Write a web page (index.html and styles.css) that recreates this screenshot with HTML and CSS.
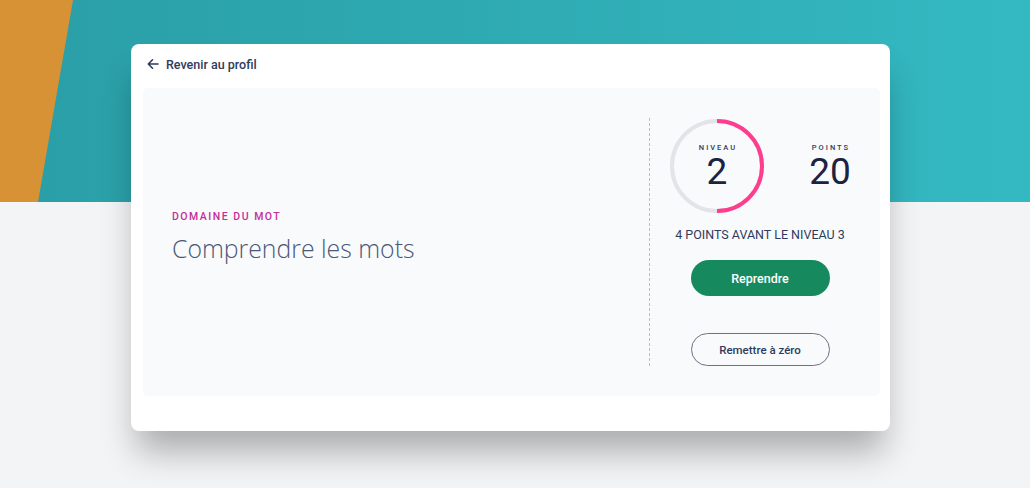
FILE: index.html
```html
<!DOCTYPE html>
<html lang="fr">
<head>
    <meta charset="UTF-8">
    <title>Comprendre les mots</title>
    <meta name="viewport" content="width=device-width, initial-scale=1.0">
    <link rel="stylesheet" href="styles.css">
</head>
<body>
    <div class="hero"></div>
    <div class="card">
        <a class="back" href="#">
            <svg width="12" height="12" viewBox="0 0 12 12"><path d="M11 6H1.5M5.5 1.8L1.3 6l4.2 4.2" fill="none" stroke="#2f3b5c" stroke-width="1.6" stroke-linecap="round" stroke-linejoin="round"/></svg>
            <span>Revenir au profil</span>
        </a>
        <div class="panel">
            <div class="domain">
                <div class="domain-label">DOMAINE DU MOT</div>
                <h1>Comprendre les mots</h1>
            </div>
            <div class="progress">
                <div class="stats">
                    <div class="ring">
                        <svg width="94" height="94" viewBox="0 0 94 94">
                            <circle cx="47" cy="47" r="45" fill="none" stroke="#e3e4e8" stroke-width="4"/>
                            <path d="M47 2a45 45 0 0 1 0 90" fill="none" stroke="#ff3d8e" stroke-width="4"/>
                        </svg>
                        <div class="ring-text">
                            <div class="small-label">NIVEAU</div>
                            <div class="big-num">2</div>
                        </div>
                    </div>
                    <div class="points">
                        <div class="small-label">POINTS</div>
                        <div class="big-num">20</div>
                    </div>
                </div>
                <div class="next">4 POINTS AVANT LE NIVEAU 3</div>
                <button class="btn-primary">Reprendre</button>
                <button class="btn-outline">Remettre à zéro</button>
            </div>
        </div>
    </div>
</body>
</html>
```

FILE: styles.css
```css
body { margin: 0; font-family: Roboto, "Liberation Sans", sans-serif; background: #f3f4f6; min-height: 488px; }
.hero { position: relative; height: 202px; background: linear-gradient(90deg, #2a9ea6 0%, #2fabb3 50%, #34b9c2 100%); overflow: hidden; }
.hero::before { content: ""; position: absolute; left: 0; top: 0; width: 80px; height: 100%; background: #d89236; clip-path: polygon(0 0, 73px 0, 38px 100%, 0 100%); }
.card { position: relative; width: 737px; margin: -158px 0 0 131px; padding: 0 10px 35px 12px; background: #fff; border-radius: 8px; box-shadow: 0 26px 34px -6px rgba(0,0,0,0.3); }
.back { display: flex; align-items: center; gap: 7px; height: 40px; padding: 0 0 4px 4px; color: #2f3b5c; text-decoration: none; font-size: 12.5px; font-weight: 500; }
.back svg { display: block; }
.panel { display: flex; height: 248px; padding: 30px 0; background: #f9fafc; border-radius: 5px; }
.domain { flex: 1; display: flex; flex-direction: column; justify-content: center; padding: 0 0 10px 29px; }
.domain-label { color: #c42d9b; font-size: 10.5px; letter-spacing: 1.5px; font-weight: 500; }
h1 { margin: 8px 0 0; font-family: "Open Sans", sans-serif; font-weight: 300; font-size: 24.8px; color: #4b5878; }
.progress { width: 180px; padding: 0 30px 0 20px; border-left: 1px dashed #b9bcc5; display: flex; flex-direction: column; align-items: center; }
.stats { width: 100%; display: flex; justify-content: space-between; align-items: flex-start; margin-top: 1px; }
.ring { position: relative; width: 94px; height: 94px; }
.ring svg { display: block; }
.ring-text { position: absolute; left: 0; top: 0; width: 100%; height: 100%; display: flex; flex-direction: column; align-items: center; padding-top: 24px; box-sizing: border-box; }
.points { display: flex; flex-direction: column; align-items: center; width: 40px; padding-top: 24px; }
.small-label { font-size: 7.5px; letter-spacing: 2px; color: #2f3b5c; font-weight: 500; margin-right: -2px; }
.big-num { font-size: 37px; line-height: 40px; color: #1b2341; font-weight: 400; }
.next { margin-top: 14px; font-size: 12.5px; color: #2f3b5c; white-space: nowrap; }
button { font-family: Roboto, sans-serif; cursor: pointer; }
.btn-primary { margin-top: 18px; width: 139px; height: 36px; border: none; border-radius: 18px; background: #168a5e; color: #fff; font-size: 12.5px; font-weight: 500; }
.btn-outline { margin-top: 37px; width: 139px; height: 33px; border: 1px solid #6d7282; border-radius: 17px; background: transparent; color: #2f3b5c; font-size: 11.5px; font-weight: 500; }
```
